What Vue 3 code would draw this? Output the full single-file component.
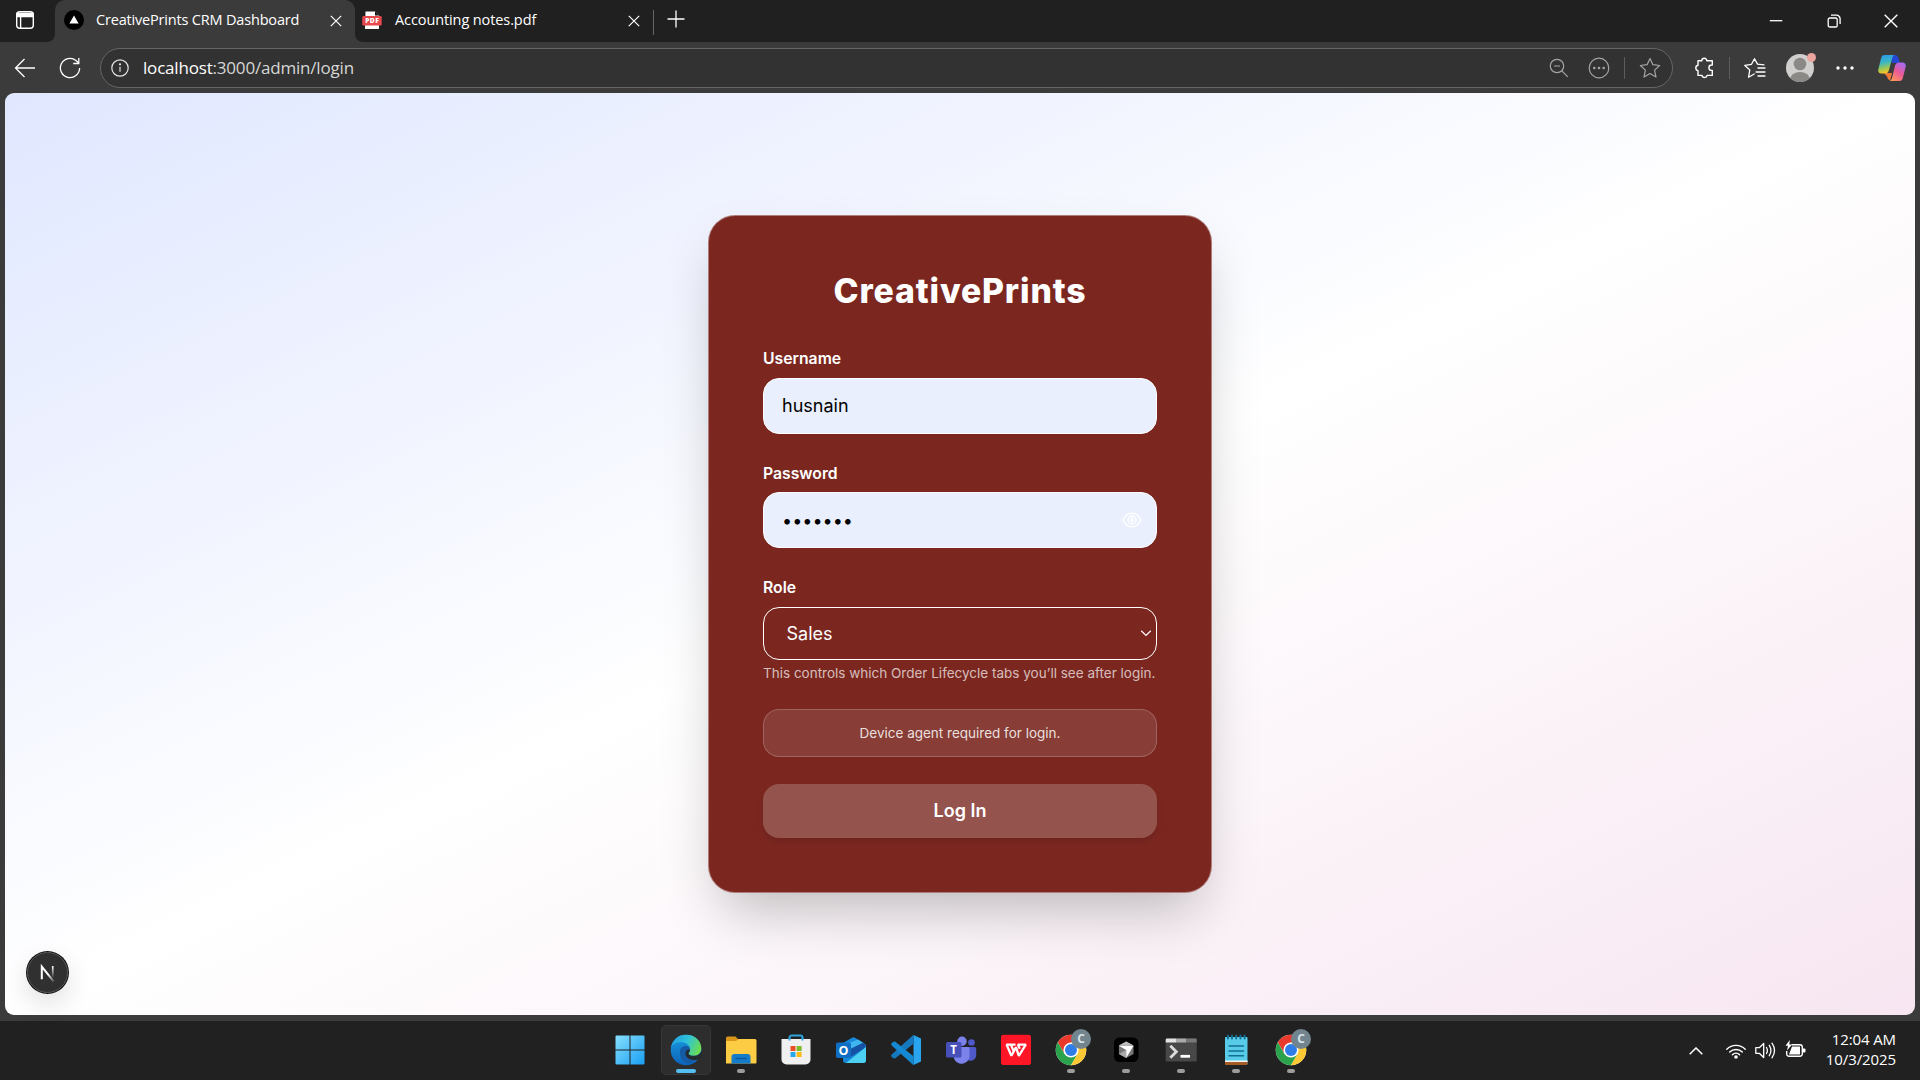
<script setup>
const apps = [
  { id: 'start' }, { id: 'edge', active: true }, { id: 'files', running: true }, { id: 'store' },
  { id: 'outlook' }, { id: 'code' }, { id: 'teams' }, { id: 'wps' }, { id: 'chrome', running: true, badge: 'C' },
  { id: 'cursor', running: true }, { id: 'terminal', running: true }, { id: 'notepad', running: true },
  { id: 'chrome', running: true, badge: 'C' },
]
</script>

<template>
  <div class="screen">
    <div class="tabstrip">
      <div class="workspace">
        <svg width="20" height="20" viewBox="0 0 20 20" fill="none" stroke="#fff" stroke-width="1.4"><rect x="1.7" y="1.7" width="16.6" height="16.6" rx="3" /><path d="M2 3.5h16v3H2z" fill="#fff" /><path d="M5.6 6v12" /></svg>
      </div>
      <div class="tab-wrap">
        <div class="tab">
          <svg class="fav" width="20" height="20" viewBox="0 0 20 20"><circle cx="10" cy="10" r="10" fill="#000" /><path d="M10 5.6 14.6 13.6H5.4z" fill="#fff" /></svg>
          <span class="tab-title t1">CreativePrints CRM Dashboard</span>
          <svg class="x" width="12" height="12" viewBox="0 0 12 12" stroke="#fff" stroke-width="1.2"><path d="M.8.8l10.4 10.4M11.2.8.8 11.2" /></svg>
        </div>
      </div>
      <div class="strip-rest">
        <svg class="fav pdf" width="20" height="20" viewBox="0 0 20 20"><path d="M3.500 1.500h9.500l4 4V19h-14z" fill="#fff" /><path d="M13 1.500l4 4h-4z" fill="#111" /><rect x=".3" y="6" width="19.400" height="9.600" rx="1.200" fill="#e5484d" /><text x="10" y="13.400" text-anchor="middle" font-size="6.700" font-weight="800" fill="#fff" font-family="Open Sans, sans-serif" textLength="13.500">PDF</text></svg>
        <span class="tab-title t2">Accounting notes.pdf</span>
        <svg class="x" width="12" height="12" viewBox="0 0 12 12" stroke="#fff" stroke-width="1.2"><path d="M.8.8l10.4 10.4M11.2.8.8 11.2" /></svg>
        <i class="tab-sep"></i>
        <svg class="plus" width="18" height="18" viewBox="0 0 18 18" stroke="#fff" stroke-width="1.3"><path d="M9 .5v17M.5 9h17" /></svg>
        <div class="win">
          <svg width="14" height="14" viewBox="0 0 14 14" stroke="#fff" stroke-width="1.3"><path d="M.8 6.700h12.500" /></svg>
          <svg width="14" height="14" viewBox="0 0 14 14" fill="none" stroke="#fff" stroke-width="1.3"><rect x="1.200" y="4" width="9" height="9" rx="1.600" /><path d="M4 1.200h5.500a3.600 3.600 0 0 1 3.600 3.600V10" /></svg>
          <svg width="14" height="14" viewBox="0 0 14 14" stroke="#fff" stroke-width="1.4"><path d="M.7.7l12.600 12.600M13.300.7.7 13.300" /></svg>
        </div>
      </div>
    </div>

    <div class="toolbar">
      <svg class="back" width="22" height="20" viewBox="0 0 22 20" fill="none" stroke="#fff" stroke-width="1.3"><path d="M10.500 1 1.500 10l9 9M1.500 10H21" /></svg>
      <svg class="reload" width="22" height="22" viewBox="0 0 22 22" fill="none" stroke="#fff" stroke-width="1.3"><path d="M20.600 11A9.600 9.600 0 1 1 17 3.500L19.600 6M19.800 1v5.500h-5.600" /></svg>
      <div class="url">
        <svg width="18" height="18" viewBox="0 0 18 18" fill="none" stroke="#e5e5e5" stroke-width="1.2"><circle cx="9" cy="9" r="8.200" /><path d="M9 7.800v5" /><circle cx="9" cy="5.300" r=".5" fill="#fff" /></svg>
        <span class="address">localhost<em>:3000/admin/login</em></span>
        <svg class="zoom" width="20" height="20" viewBox="0 0 20 20" fill="none" stroke="#a5a5a5" stroke-width="1.2"><circle cx="8" cy="8" r="6.700" /><path d="M5 8h6M12.800 12.800l6 6" /></svg>
        <svg class="more" width="22" height="22" viewBox="0 0 22 22" fill="none" stroke="#a5a5a5" stroke-width="1.2"><circle cx="11" cy="11" r="9.800" /><g fill="#a5a5a5" stroke="none"><circle cx="6.300" cy="11" r="1.300" /><circle cx="11" cy="11" r="1.300" /><circle cx="15.700" cy="11" r="1.300" /></g></svg>
        <i class="sep"></i>
        <svg class="star" width="22" height="22" viewBox="0 0 22 22" fill="none" stroke="#a5a5a5" stroke-width="1.2" stroke-linejoin="round"><path d="M11 1.500l2.900 6.200 6.700.8-5 4.600 1.400 6.900-6-3.400-6 3.400 1.400-6.900-5-4.600 6.700-.8z" /></svg>
      </div>
      <svg class="ext" width="20" height="22" viewBox="0 0 20 22" fill="none" stroke="#fff" stroke-width="1.4" stroke-linejoin="round"><path d="M4 3.800h3.800a2.500 2.500 0 0 1 5 0h5.500V8h-.7a2.700 2.700 0 0 0 0 5.400h.7v5h-5.200a2.600 2.600 0 0 1-5.100 0H4v-4.800a2.700 2.700 0 0 1 0-5.300z" /></svg>
      <i class="sep"></i>
      <svg class="favs" width="22" height="20" viewBox="0 0 22 20" fill="none" stroke="#fff" stroke-width="1.3" stroke-linejoin="round" stroke-linecap="round"><path d="M20 6.800l-6.500-.7L10.500.8 7.500 6.300.8 7.400l5 4.500-1.200 7.300 5.600-3.200M14 10h7M12 14h9M14 18h7" /></svg>
      <svg class="avatar" width="30" height="30" viewBox="0 0 30 30"><defs><clipPath id="av"><circle cx="14" cy="16" r="14" /></clipPath></defs><g clip-path="url(#av)"><rect y="2" width="28" height="28" fill="#d0cfcd" /><circle cx="14" cy="12" r="6.300" fill="#8b8986" /><ellipse cx="14" cy="28" rx="10" ry="8" fill="#8b8986" /></g><circle cx="25.500" cy="5.500" r="4.500" fill="#eba69f" /></svg>
      <svg class="menu" width="18" height="6" viewBox="0 0 18 6" fill="#fff"><circle cx="2" cy="3" r="1.700" /><circle cx="9" cy="3" r="1.700" /><circle cx="16" cy="3" r="1.700" /></svg>
      <svg class="copilot" width="28" height="26" viewBox="0 0 28 26"><defs>
        <linearGradient id="cpa" x1="0" y1="0" x2=".2" y2="1"><stop stop-color="#2b94ee" /><stop offset=".45" stop-color="#3bb7c4" /><stop offset=".8" stop-color="#a8c94a" /><stop offset="1" stop-color="#f5c52c" /></linearGradient>
        <linearGradient id="cpb" x1=".8" y1="0" x2=".2" y2="1"><stop stop-color="#a86af5" /><stop offset=".5" stop-color="#ea5a96" /><stop offset="1" stop-color="#ff9a55" /></linearGradient></defs>
        <path d="M12 0h5.500c2 0 2.700 2 3.300 4.200L22 8h-8z" fill="#2446d0" /><path d="M6 18h8l-2 8h4c-4 0-6-1-7-4.500z" fill="#f07a3a" />
        <path d="M6.500 0H17c-2 0-2.600 2-3.300 5l-2.600 9.500c-.8 3-2 4-4.500 4H3.500C.8 18.500-.3 16.500.4 14L3 3.500C3.500 1 4.800 0 6.500 0z" fill="url(#cpa)" />
        <path d="M21.500 26H11c2 0 2.800-2 3.500-5l2.300-9.500c.8-3 2-4 4.500-4h3.200c2.700 0 3.700 2 3.100 4.500L25 22.500c-.6 2.500-1.800 3.500-3.500 3.500z" fill="url(#cpb)" /></svg>
    </div>

    <main class="page">
      <form class="card" @submit.prevent>
        <h1>CreativePrints</h1>
        <div class="field">
          <label>Username</label>
          <div class="input">husnain</div>
        </div>
        <div class="field">
          <label>Password</label>
          <div class="input"><span class="dots">•••••••</span>
            <svg class="eye" width="20" height="20" viewBox="0 0 20 20" fill="none" stroke="#fff" stroke-opacity=".85" stroke-width="1.700" stroke-linejoin="round"><path d="M.9 10 4.300 5.300Q6 3.500 8 3.500h4q2 0 3.700 1.800L19.100 10l-3.400 4.700q-1.700 1.800-3.700 1.800H8q-2 0-3.700-1.800z" /><circle cx="10" cy="10" r="3.900" /><circle cx="10" cy="10" r="1.200" /></svg>
          </div>
        </div>
        <div class="field">
          <label>Role</label>
          <div class="input select">Sales
            <svg width="12" height="8" viewBox="0 0 12 8" fill="none" stroke="#fff" stroke-width="1.2"><path d="M1.200 1.800l4.800 4.700 4.800-4.700" /></svg>
          </div>
          <p class="hint">This controls which Order Lifecycle tabs you’ll see after login.</p>
        </div>
        <div class="notice">Device agent required for login.</div>
        <button class="login">Log In</button>
      </form>
      <div class="next">
        <svg width="43" height="43" viewBox="0 0 43 43"><defs><linearGradient id="nx" x1="0" y1="0" x2="0" y2="1"><stop stop-color="#fff" /><stop offset="1" stop-color="#fff" stop-opacity=".1" /></linearGradient><linearGradient id="nd" gradientUnits="userSpaceOnUse" x1="20" y1="20" x2="28" y2="31"><stop offset=".3" stop-color="#fff" /><stop offset="1" stop-color="#fff" stop-opacity=".1" /></linearGradient></defs>
          <circle cx="21.500" cy="21.500" r="21.500" fill="#111" /><circle cx="21.500" cy="21.500" r="20" fill="#303030" stroke="#5a5a5a" />
          <path d="M15.800 28.200V15.600l12 15" fill="none" stroke="url(#nd)" stroke-width="2" /><rect x="25.900" y="15" width="1.700" height="11" fill="url(#nx)" /></svg>
      </div>
    </main>

    <footer class="taskbar">
      <div></div>
      <div class="apps">
        <div v-for="(a, i) in apps" :key="i" class="app" :class="{ active: a.active, running: a.running }">
          <svg width="32" height="32" viewBox="0 0 32 32">
            <template v-if="a.id === 'start'">
              <defs><linearGradient id="win" x1="0" y1="0" x2="32" y2="32" gradientUnits="userSpaceOnUse"><stop stop-color="#8be2fd" /><stop offset="1" stop-color="#119af2" /></linearGradient></defs>
              <path d="M1.500 1.500h13v14H.5v-13a1 1 0 0 1 1-1zM15.500 1.500h13a1 1 0 0 1 1 1v13h-14zM.5 16.500h14v14h-13a1 1 0 0 1-1-1zM15.500 16.500h14v13a1 1 0 0 1-1 1h-13z" fill="url(#win)" />
            </template>
            <template v-else-if="a.id === 'edge'">
              <defs><linearGradient id="e1" x1="0" y1=".3" x2="1" y2=".6"><stop stop-color="#239ee1" /><stop offset=".5" stop-color="#2fc4d9" /><stop offset="1" stop-color="#6edc4c" /></linearGradient><linearGradient id="e2" x1="0" y1="0" x2="0" y2="1"><stop stop-color="#1b9be2" /><stop offset="1" stop-color="#0c63b8" /></linearGradient></defs>
              <circle cx="16" cy="16" r="15.300" fill="url(#e2)" />
              <path d="M11 24c-3-7 0-12 5-12 3 0 4.500 2 4 4-1 2-2 3-1 4.500 2 2.500 7 2 10.500-.5C26 29 16 33 11 24z" fill="#155aa5" />
              <path d="M.8 14C2.500 5 9 .700 16 .700c9 0 15.300 6 15.300 13.500 0 5-3.600 7.600-7.500 7.600-3 0-5.300-1.100-5.300-2.400 0-1 1.500-1.600 1.500-3.900C20 11 16 8.300 11 8.300c-5 0-9 2.400-10.200 5.700z" fill="url(#e1)" />
              <path d="M18.500 19.400c0 1.300 2.300 2.400 5.300 2.400 3 0 5.700-1.300 6.900-3.900l2 4.500-4.500 3c-4 1.600-11.600.100-12.600-4.900-.4-3 1.100-5 4.200-4.900.3 2.400-1.300 2.800-1.300 3.800z" fill="#252b30" />
            </template>
            <template v-else-if="a.id === 'files'">
              <path d="M1 4a1.500 1.500 0 0 1 1.500-1.500h8L13 5v5H1z" fill="#d9961a" /><path d="M1 7h10l2.500-2H30a1.500 1.500 0 0 1 1.500 1.500v22A1 1 0 0 1 30.500 29.500H1z" fill="#fccc45" /><path d="M6.500 29.500V23a3 3 0 0 1 3-3h13a3 3 0 0 1 3 3v6.500z" fill="#147cc8" /><path d="M10.500 24.500h11" stroke="#0b5aa0" stroke-width="1.500" />
            </template>
            <template v-else-if="a.id === 'store'">
              <path d="M9.500 7V3.500a2 2 0 0 1 2-2h9a2 2 0 0 1 2 2V7" fill="none" stroke="#2fa4dc" stroke-width="1.900" /><path d="M1.500 5h29v20.500a5 5 0 0 1-5 5h-19a5 5 0 0 1-5-5z" fill="#f0f0f0" /><path d="M9.500 6.500V3.500M22.500 6.500V3.500" stroke="#2fa4dc" stroke-width="1.900" /><path d="M10.500 12h5v5h-5z" fill="#e94f27" /><path d="M16.600 12h5v5h-5z" fill="#7db928" /><path d="M10.500 18h5v5h-5z" fill="#28a8ea" /><path d="M16.600 18h5v5h-5z" fill="#fcba12" />
            </template>
            <template v-else-if="a.id === 'outlook'">
              <path d="M8 9 17 3.800a3 3 0 0 1 3 0l10 6.200a2 2 0 0 1 1 2V26a3 3 0 0 1-3 3H11a3 3 0 0 1-3-3z" fill="#1687d9" /><path d="M9 11 23 5.500l5.500 3.500L13 19.500z" fill="#3fb6ee" /><path d="M9 18 28 8.800l2.500 2.200q.5 2-1.500 3.500L14 24z" fill="#1453a4" /><path d="M31 13v13a3 3 0 0 1-3 3H11z" fill="#4cd1f3" /><rect x="1" y="8.500" width="15" height="15.500" rx="1.800" fill="#106fc5" /><text x="8.500" y="20.800" text-anchor="middle" font-size="12.500" font-weight="700" fill="#fff" font-family="Open Sans, sans-serif">O</text>
            </template>
            <template v-else-if="a.id === 'code'">
              <path d="M23.500 1 31 4.500v23L23.500 31z" fill="#29a5ef" /><path d="M23.500 .800v9L5 24.500 2.800 24 1 22l1-1.700z" fill="#1678be" /><path d="M23.500 31.200v-9L5 7.500 2.800 8 1 10l1 1.700z" fill="#1588d2" />
            </template>
            <template v-else-if="a.id === 'teams'">
              <circle cx="26.500" cy="8.500" r="3.300" fill="#5059c9" /><path d="M22 13h7.700a1.500 1.500 0 0 1 1.500 1.500v7a6 6 0 0 1-9 4.500z" fill="#5059c9" /><circle cx="17" cy="7.300" r="4.700" fill="#7b83eb" /><path d="M9 13h14a1.500 1.500 0 0 1 1.500 1.500v8a8 8 0 0 1-15.500 2z" fill="#7b83eb" /><rect x="1" y="8" width="15.500" height="15.500" rx="1.500" fill="#4750b8" /><text x="8.700" y="20" text-anchor="middle" font-size="11.500" font-weight="700" fill="#fff" font-family="Open Sans, sans-serif">T</text>
            </template>
            <template v-else-if="a.id === 'wps'">
              <rect x="1" y=".7" width="30" height="30.300" rx="2.800" fill="#ff1626" /><path d="M15.500 10.600H6.600l4.800 11.200 4.600-8.600 2.800 8.600 7-11.200H18l1.800 4.200M10.800 10.600l2.800 6.400" fill="none" stroke="#fff" stroke-width="2.300" stroke-linejoin="bevel" />
            </template>
            <template v-else-if="a.id === 'chrome'">
              <circle cx="16" cy="16" r="15.300" fill="#fff" /><path d="M16 .700A15.300 15.300 0 0 0 2.750 8.350L9.400 19.850 16 8.350h13.250A15.300 15.300 0 0 0 16 .700z" fill="#e8392c" /><path d="M2.750 8.350A15.300 15.300 0 0 0 16 31.300l6.650-11.500L9.400 19.850z" fill="#2ba24c" /><path d="M29.250 8.350A15.300 15.300 0 0 1 16 31.300l6.650-11.500L16 8.350z" fill="#fcc934" /><circle cx="16" cy="16" r="7.600" fill="#fff" /><circle cx="16" cy="16" r="6" fill="#2f7de9" />
            </template>
            <template v-else-if="a.id === 'cursor'">
              <rect x="4" y="3.500" width="24.500" height="24.500" rx="5.500" fill="#000" /><path d="M16.200 7.500 23.500 11.600v8.300l-7.300 4.200-7.300-4.200v-8.300z" fill="#777" /><path d="M16.200 7.500 23.500 11.600H8.900z" fill="#bbb" /><path d="M8.900 11.700h14.600l-7.300 12.400v-8z" fill="#fff" /><path d="M8.900 19.900l7.300-4v8.200z" fill="#aaa" />
            </template>
            <template v-else-if="a.id === 'terminal'">
              <rect x=".7" y="4.500" width="31" height="23" rx="1.200" fill="#484848" /><path d="M.7 8.500V5.700a1.200 1.200 0 0 1 1.200-1.200H11v4z" fill="#e2e2e2" /><path d="M11 4.500h10v4H11z" fill="#aaa" /><path d="M21 4.500h9.500a1.200 1.200 0 0 1 1.200 1.200v2.800H21z" fill="#777" /><path d="M5.300 11.700l6 6-6 6" fill="none" stroke="#ddd" stroke-width="2.800" /><path d="M15.500 22.300H25" stroke="#fff" stroke-width="2.800" />
            </template>
            <template v-else>
              <rect x="5" y="3" width="22.500" height="27.500" rx="1" fill="#58cbe9" /><path d="M5 28h22.500v2a1 1 0 0 1-1 1H6a1 1 0 0 1-1-1z" fill="#a65a24" /><path d="M5 26.500h22.500v1.500H5z" fill="#f5f5f5" /><path d="M9 12h14.500M9 17h14.500M9 21.700h14.500" stroke="#126f94" stroke-width="1.500" stroke-linecap="round" /><path d="M8 1.500v3M12 1.500v3M16.200 1.500v3M20.400 1.500v3M24.600 1.500v3" stroke="#126f94" stroke-width="1.900" stroke-linecap="round" />
            </template>
          </svg>
          <b v-if="a.badge" class="badge">{{ a.badge }}</b>
        </div>
      </div>
      <div class="tray">
        <svg class="chev" width="14" height="8" viewBox="0 0 14 8" fill="none" stroke="#fff" stroke-width="1.500"><path d="M.7 7.300 7 1l6.300 6.300" /></svg>
        <svg class="wifi" width="20" height="16" viewBox="0 0 20 16" fill="none" stroke="#fff" stroke-width="1.400" stroke-linecap="round"><path d="M.8 6.200a13 13 0 0 1 18.400 0M3.700 9a9 9 0 0 1 12.600 0M6.400 11.700a5.200 5.200 0 0 1 7.200 0" /><circle cx="10" cy="14" r="1.100" fill="#fff" /></svg>
        <svg class="vol" width="21" height="17" viewBox="0 0 21 17" fill="none" stroke="#fff" stroke-width="1.300" stroke-linejoin="round" stroke-linecap="round"><path d="M.8 5.700h3.500L8.700 1.500v14l-4.400-4.200H.8zM11.500 5.500q1.800 3 0 6M14.300 3.300q3.300 5.200 0 10.400M17 1.200q5 7.300 0 14.600" /></svg>
        <svg class="bat" width="21" height="18" viewBox="0 0 21 18"><path d="M6.500 4.700H15a2.300 2.300 0 0 1 2.300 2.300v7A2.300 2.300 0 0 1 15 16.300H4A2.300 2.300 0 0 1 1.700 14V11" fill="none" stroke="#fff" stroke-width="1.400" /><path d="M18 8.500h1.500a1 1 0 0 1 1 1v2a1 1 0 0 1-1 1H18z" fill="#fff" /><path d="M7 6.600h8V14.400H4z" fill="#fff" /><path d="M4.800 0 .5 5.800H3L2 10.500 7 4.500H4.300z" fill="#fff" /></svg>
        <div class="clock"><span>12:04 AM</span><span class="date">10/3/2025</span></div>
      </div>
    </footer>
  </div>
</template>

<style>
body { background: #202020; overflow: hidden; }
</style>

<style scoped>
.screen { width: 1920px; height: 1080px; display: flex; flex-direction: column; background: #3b3b3b; font-family: "Open Sans", "Noto Sans", sans-serif; color: #fff; overflow: hidden; }
svg { display: block; flex: none; }
.tabstrip { height: 42px; display: flex; }
.workspace { width: 55px; box-sizing: border-box; padding: 10px 0 0 15px; background: #202020; border-bottom-right-radius: 8px; }
.tab-wrap { width: 300px; background: linear-gradient(#202020 50%, #3b3b3b 50%); }
.tab { height: 42px; box-sizing: border-box; background: #3b3b3b; border-radius: 10px 10px 0 0; display: flex; padding: 0 0 0 9px; }
.fav { margin-top: 10px; }
.tab-title { font-size: 14.500px; line-height: 20px; margin: 10px 0 0 12px; white-space: nowrap; }
.t1 { width: 223.500px; letter-spacing: -0.180px; }
.t2 { width: 223px; margin-left: 13px; letter-spacing: -0.100px; }
.x { margin: 15px 0 0 10px; }
.strip-rest { flex: 1; background: #202020; border-bottom-left-radius: 8px; display: flex; padding-left: 7px; }
.tab-sep { width: 1px; height: 25px; margin: 10px 0 0 13px; background: #666; }
.plus { margin: 10px 0 0 13px; }
.win { display: flex; gap: 43.500px; margin: 14px 22px 0 auto; }
.toolbar { height: 50.500px; box-sizing: border-box; display: flex; align-items: center; padding: 1px 14px 0 14px; flex: none; }
.reload { margin-left: 23px; }
.url { box-sizing: border-box; width: 1573px; height: 40px; border: 1.500px solid #666; border-radius: 20px; background: #323232; margin-left: 19px; display: flex; align-items: center; padding: 0 11.500px 0 10px; }
.address { font-size: 17px; margin-left: 14px; letter-spacing: -0.190px; line-height: 24px; flex: 1; }
.address em { font-style: normal; color: #d6d6d6; }
.more { margin-left: 19px; }
.sep { width: 1px; height: 22px; background: #5d5d5d; }
.url .sep { margin: 0 14px; }
.ext { margin: 0 15px 0 21px; }
.favs { margin-left: 14px; }
.avatar { margin: -2px 0 0 20px; }
.menu { margin-left: 20px; }
.copilot { margin-left: auto; }
.page { position: relative; height: 922.500px; margin: 0 5px; border-radius: 9px; background: linear-gradient(to bottom right, #e0e7ff, #fff 50%, #f7e6f1); display: flex; justify-content: center; align-items: center; font-family: Inter, sans-serif; flex: none; }
.card { width: 504px; box-sizing: border-box; padding: 54.500px 54px 54px; border: 1px solid rgba(255, 255, 255, .4); border-radius: 27px; background: #7b2720; box-shadow: 0 28px 56px -13px rgba(0, 0, 0, .26); }
h1 { margin: 0 0 35px; font-size: 33.750px; line-height: 40.500px; font-weight: 800; letter-spacing: .84px; text-align: center; }
.field { margin-bottom: 27px; }
label { display: block; font-size: 15.750px; line-height: 22.500px; font-weight: 600; margin: 0 0 7px; padding-top: 2px; }
.input { height: 56px; box-sizing: border-box; border: 1px solid #fff; border-radius: 16px; background: #e9effd; color: #000; font-size: 18px; display: flex; align-items: center; justify-content: space-between; padding: 0 14px 0 18px; }
.select { height: 53px; background: transparent; color: #fff; padding: 0 4px 0 22.500px; }
.hint { margin: 4.500px 0 0; font-size: 13.500px; line-height: 18px; color: rgba(255, 255, 255, .7); white-space: nowrap; }
.notice { box-sizing: border-box; height: 47.500px; border: 1px solid rgba(255, 255, 255, .2); border-radius: 16px; background: rgba(255, 255, 255, .1); color: rgba(255, 255, 255, .85); font-size: 13.500px; line-height: 46px; text-align: center; }
.login { display: block; width: 100%; height: 54px; margin-top: 27px; padding: 0; border: 0; border-radius: 16px; background: #95534e; box-shadow: 0 4px 7px -1px rgba(0, 0, 0, .12); color: #fff; font: 600 18px/54px Inter, sans-serif; }
.next { position: absolute; left: 21px; bottom: 21px; border-radius: 50%; box-shadow: 0 10px 26px rgba(0, 0, 0, .12); }
.taskbar { margin-top: auto; height: 59px; box-sizing: border-box; background: #212121; display: grid; grid-template-columns: 603px auto 1fr; }
.apps { display: flex; }
.app { position: relative; width: 55px; height: 59px; box-sizing: border-box; padding: 13px 11.500px 0; }
.app svg { position: relative; }
.app.active::before { content: ""; position: absolute; left: 3px; top: 4px; width: 48px; height: 48px; border: 1px solid #363636; border-radius: 5px; background: #2d2d2d; }
.app.running::after, .app.active::after { content: ""; position: absolute; bottom: 7px; left: 23.500px; width: 8px; height: 4px; border-radius: 2px; background: #9c9c9c; }
.app.active::after { left: 17.500px; width: 20px; background: #55bdf0; }
.badge { position: absolute; left: 28px; top: 7.500px; width: 20px; height: 20px; border-radius: 50%; background: #72848e; color: #d8e3e9; font: 700 12px/20px "Open Sans", sans-serif; text-align: center; }
.tray { display: flex; align-items: center; justify-content: flex-end; padding-right: 24px; }
.wifi { margin-left: 23px; }
.vol { margin-left: 9px; }
.bat { margin: -3px 0 0 9px; }
.clock { width: 90px; display: flex; flex-direction: column; text-align: right; font-size: 15px; line-height: 20px; letter-spacing: -0.100px; margin-top: -4px; }
</style>
